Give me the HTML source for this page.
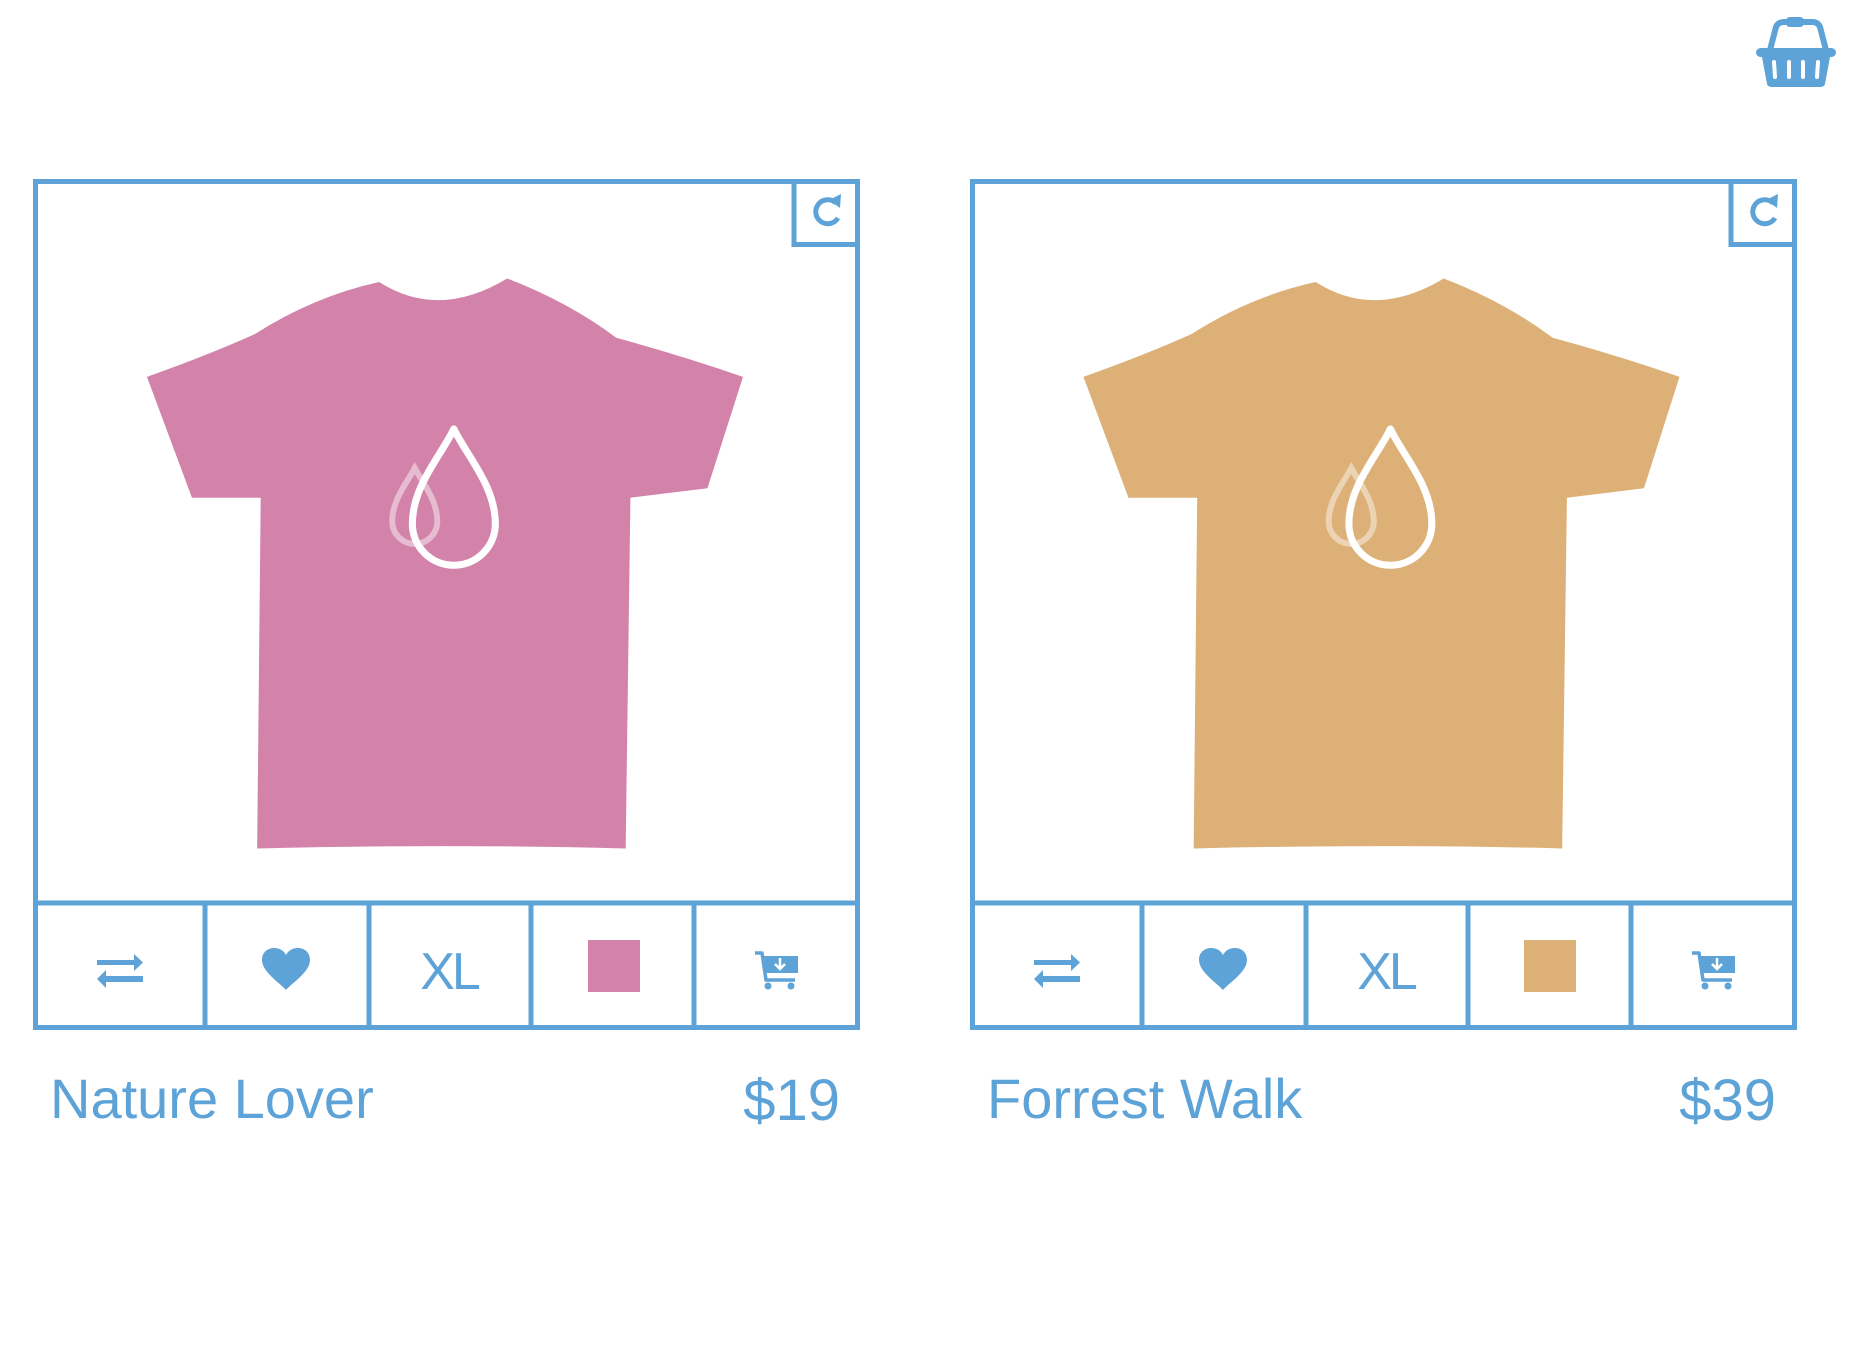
<!DOCTYPE html>
<html><head><meta charset="utf-8"><style>
html,body{margin:0;padding:0;background:#fff;width:1858px;height:1362px;overflow:hidden}
svg{display:block}
text{font-family:"Liberation Sans",sans-serif;fill:#5ea3d8}
</style></head><body>
<svg width="1858" height="1362" viewBox="0 0 1858 1362" xmlns="http://www.w3.org/2000/svg">
<defs>
<g id="shirt">
<path d="M320,238 Q370,270 428,235 Q480,255 520,285 Q575,300 627,318 L597,412 L532,420 L528,716 Q380,712 217,716 L220,420 L162,420 L124,318 Q175,300 215,282 Q265,250 320,238 Z"/>
</g>
<g id="drops">
<path d="M350,395 C343,408 331,422 331,440 A19,19 0 0 0 369,440 C369,422 357,408 350,395 Z" fill="none" stroke="#fff" stroke-opacity="0.45" stroke-width="5"/>
<path d="M383,362 C372,385 348,410 348,442 A35,35 0 0 0 418,442 C418,410 394,385 383,362 Z" fill="none" stroke="#fff" stroke-width="6" stroke-linejoin="round"/>
</g>
<g id="card">
<rect x="35.5" y="181.5" width="822" height="846" fill="none" stroke="#5ea3d8" stroke-width="5"/>
<line x1="33" y1="903" x2="860" y2="903" stroke="#5ea3d8" stroke-width="5"/>
<line x1="205" y1="903" x2="205" y2="1030" stroke="#5ea3d8" stroke-width="5"/>
<line x1="369" y1="903" x2="369" y2="1030" stroke="#5ea3d8" stroke-width="5"/>
<line x1="531" y1="903" x2="531" y2="1030" stroke="#5ea3d8" stroke-width="5"/>
<line x1="694" y1="903" x2="694" y2="1030" stroke="#5ea3d8" stroke-width="5"/>
<path d="M794,179 V244.5 H860" fill="none" stroke="#5ea3d8" stroke-width="5"/>
<path d="M836,203 A12,12 0 1 0 838,218" fill="none" stroke="#5ea3d8" stroke-width="5"/>
<path d="M829,200 L841,194 L840,208 Z" fill="#5ea3d8"/>
<rect x="97" y="960" width="38" height="5" fill="#5ea3d8"/>
<path d="M134,954 L143,962.5 L134,971 Z" fill="#5ea3d8"/>
<rect x="105" y="976" width="38" height="6" fill="#5ea3d8"/>
<path d="M106,970 L97,979 L106,988 Z" fill="#5ea3d8"/>
<path d="M286,990 C280,983 262,972 262,960 C262,952 268,948 274,948 C280,948 284,951 286,955 C288,951 292,948 298,948 C304,948 310,952 310,960 C310,972 292,983 286,990 Z" fill="#5ea3d8"/>
<text x="449" y="989" font-size="52" text-anchor="middle" letter-spacing="-3">XL</text>
<path d="M755,953 H762 L766,980 H795" fill="none" stroke="#5ea3d8" stroke-width="3.5" stroke-linejoin="round"/>
<path d="M763,956 H798 V973 H766 Z" fill="#5ea3d8"/>
<path d="M780,958 V968 M775,964 L780,969 L785,964" fill="none" stroke="#fff" stroke-width="2.5"/>
<circle cx="768" cy="986" r="3.5" fill="#5ea3d8"/>
<circle cx="791" cy="986" r="3.5" fill="#5ea3d8"/>
</g>
</defs>

<path d="M1770,50 L1776,27 Q1778,22 1784,22 L1812,22 Q1818,22 1820,27 L1826,50" fill="none" stroke="#5ea3d8" stroke-width="6" stroke-linejoin="round"/>
<rect x="1786" y="17" width="18" height="10" rx="4" fill="#5ea3d8"/>
<rect x="1756" y="48" width="80" height="9" rx="4.5" fill="#5ea3d8"/>
<path d="M1762,57 H1830 L1825,84 Q1824,87 1820,87 H1772 Q1768,87 1767,84 Z" fill="#5ea3d8"/>
<g stroke="#fff" stroke-width="4" stroke-linecap="round">
<line x1="1774" y1="62" x2="1775" y2="77"/>
<line x1="1789" y1="62" x2="1789" y2="77"/>
<line x1="1803" y1="62" x2="1803" y2="77"/>
<line x1="1818" y1="62" x2="1817" y2="77"/>
</g>

<use href="#card"/>
<g transform="scale(1.185)">
<use href="#shirt" fill="#d383aa"/>
<use href="#drops"/>
</g>
<rect x="588" y="940" width="52" height="52" fill="#d383aa"/>
<text x="50" y="1118" font-size="56">Nature Lover</text>
<text x="840" y="1120" font-size="58" text-anchor="end">$19</text>

<g transform="translate(937,0)"><use href="#card"/></g>
<g transform="translate(936.5,0) scale(1.185)">
<use href="#shirt" fill="#ddb077"/>
<use href="#drops"/>
</g>
<rect x="1524" y="940" width="52" height="52" fill="#ddb077"/>
<text x="987" y="1118" font-size="56">Forrest Walk</text>
<text x="1776" y="1120" font-size="58" text-anchor="end">$39</text>
</svg>
</body></html>
